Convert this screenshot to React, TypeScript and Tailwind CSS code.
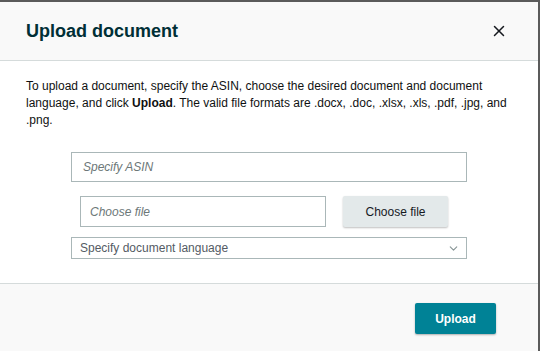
import { X, ChevronDown } from 'lucide-react';

export default function App() {
    return (
        <div className="flex h-[351px] w-[540px] flex-col border-t-2 border-r-2 border-[#5b5b5b] font-['Liberation_Sans',Arial,sans-serif] text-[#16191f]">
            {/* Header */}
            <div className="flex h-[59px] shrink-0 items-center justify-between border-b border-[#d5dbdb] bg-[#f9f9f9] pl-[26px] pr-[30px]">
                <h2 className="text-[18px] font-bold leading-none text-[#002f36]">Upload document</h2>
                <X className="h-[18px] w-[18px] text-[#16191f]" strokeWidth={2} />
            </div>

            {/* Body */}
            <div className="flex-1 bg-white px-[26px] pt-[17px]">
                <p className="text-[12px] leading-[17px] text-[#0f1111]">
                    To upload a document, specify the ASIN, choose the desired document and document language, and click{' '}
                    <span className="font-bold">Upload</span>. The valid file formats are .docx, .doc, .xlsx, .xls, .pdf, .jpg, and .png.
                </p>

                <div className="mx-auto mt-[23px] flex w-[396px] flex-col">
                    <div className="flex h-[30px] items-center border border-[#aab7b8] px-[11px] text-[12px] italic text-[#6c7778]">
                        Specify ASIN
                    </div>

                    <div className="mt-[14px] flex items-center gap-[17px] pl-[9px]">
                        <div className="flex h-[31px] w-[246px] items-center border border-[#aab7b8] px-[9px] text-[12px] italic text-[#6c7778]">
                            Choose file
                        </div>
                        <button className="h-[31px] w-[105px] rounded-[2px] bg-[#e3e9ea] text-[12px] text-[#16191f] shadow-[0_1px_2px_rgba(0,0,0,0.25)]">
                            Choose file
                        </button>
                    </div>

                    <div className="mt-[10px] flex h-[22px] items-center justify-between border border-[#aab7b8] pl-[8px] pr-[6px] text-[12px] text-[#545b64]">
                        <span>Specify document language</span>
                        <ChevronDown className="h-[13px] w-[13px] text-[#879596]" strokeWidth={2} />
                    </div>
                </div>
            </div>

            {/* Footer */}
            <div className="flex h-[68px] shrink-0 items-start justify-end border-t border-[#d5dbdb] bg-[#f9f9f9] pr-[42px] pt-[19px]">
                <button className="h-[31px] w-[81px] rounded-[2px] bg-[#008296] text-[12px] font-bold text-white shadow-[0_1px_2px_rgba(0,0,0,0.3)]">
                    Upload
                </button>
            </div>
        </div>
    );
}
